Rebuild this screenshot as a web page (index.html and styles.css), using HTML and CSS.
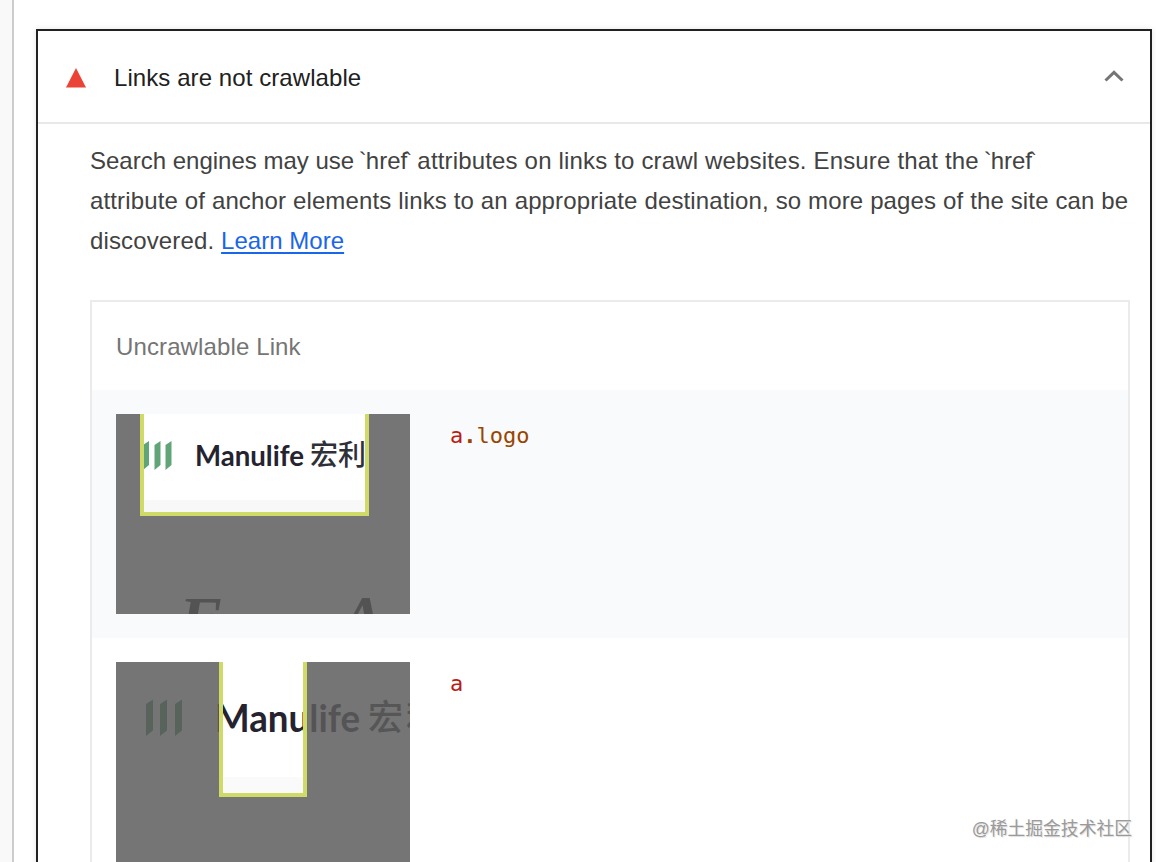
FILE: index.html
```html
<!DOCTYPE html>
<html lang="en">
<head>
<meta charset="utf-8">
<title>Links are not crawlable</title>
<link rel="stylesheet" href="styles.css">
</head>
<body>
<div class="page">
  <aside class="gutter"></aside>
  <main class="audit">
    <header class="audit-header">
      <svg class="fail-icon" width="20" height="20" viewBox="0 0 20 20"><path d="M10 0L20 19.5H0z" fill="#eb4335"/></svg>
      <h1 class="audit-title">Links are not crawlable</h1>
      <svg class="chevron" width="20" height="12" viewBox="0 0 20 12"><path d="M1.500 10.500L10 2.300L18.500 10.500" fill="none" stroke="#757575" stroke-width="3"/></svg>
    </header>
    <section class="audit-body">
      <p class="description"><span class="line">Search engines may use <span class="tick">`</span>href<span class="tick tick-end">`</span> <span class="mid">attributes on links to crawl websites. Ensure that the </span><span class="tick">`</span>href<span class="tick tick-end">`</span></span><span class="line line-wide">attribute of anchor elements links to an appropriate destination, so more pages of the site can be</span><span class="line line-wide">discovered. <a class="link" href="#">Learn More</a></span></p>
      <div class="table">
        <div class="table-head">Uncrawlable Link</div>
        <div class="row row-shaded">
          <svg class="thumb" width="294" height="200" viewBox="0 0 294 200">
            <rect width="294" height="200" fill="#fff"/>
            <rect x="28" y="86" width="221" height="13" fill="#f8f8f8"/>
            <g fill="#5fa578">
              <path d="M27 31l6-4v24l-6 5zM38.500 31l6-4v24l-6 5zM49.500 31l6-4v24l-6 5z"/>
            </g>
            <text class="brand" x="79" y="52" font-size="29" textLength="109" lengthAdjust="spacingAndGlyphs">Manulife</text>
            <text class="brand-cn" x="194" y="51" font-size="28">宏利</text>
            <text class="hero" x="63" y="227" font-size="64">F</text>
            <text class="hero" x="225" y="226" font-size="64">A</text>
            <path class="shade" fill-rule="evenodd" d="M0 0H294V200H0zM24 0V102H253V0z"/>
            <path class="frame" d="M26 0V100H251V0"/>
          </svg>
          <code class="selector"><span class="tag">a</span><span class="dot">.</span>logo</code>
        </div>
        <div class="row">
          <svg class="thumb" width="294" height="200" viewBox="0 0 294 200">
            <rect width="294" height="200" fill="#fff"/>
            <rect x="107" y="115" width="80" height="16" fill="#fafafa"/>
            <g fill="#3f8a55">
              <path d="M30 42l7-4.500v31l-7 5.500zM44 42l7-4.500v31l-7 5.500zM59 42l7-4.500v31l-7 5.500z"/>
            </g>
            <text class="brand" x="99" y="69.500" font-size="38" textLength="145" lengthAdjust="spacingAndGlyphs">Manulife</text>
            <text class="brand-cn" x="252" y="68" font-size="35">宏<tspan dx="3">利</tspan></text>
            <path class="shade" fill-rule="evenodd" d="M0 0H294V200H0zM103 0V135H191V0z"/>
            <path class="frame" d="M105 0V133H189V0"/>
          </svg>
          <code class="selector"><span class="tag">a</span></code>
        </div>
      </div>
    </section>
  </main>
  <div class="watermark">@稀土掘金技术社区</div>
</div>
</body>
</html>
```
FILE: styles.css
```css
* { box-sizing: border-box; }

body {
  margin: 0;
  background: #fff;
  font-family: "Liberation Sans", Arial, sans-serif;
  font-size: 24px;
  color: #424242;
}

.page {
  position: relative;
  display: flex;
  height: 862px;
  overflow: hidden;
}

.gutter {
  flex: 0 0 14px;
  background: #f9f9f9;
  border-right: 2px solid #ccc;
}

.audit {
  flex: 0 0 1116px;
  height: 900px;
  margin: 29px 0 0 22px;
  border: 2px solid #212121;
  box-shadow: 0 0 6px rgba(0, 0, 0, .1);
  background: #fff;
}

.audit-header {
  display: flex;
  align-items: center;
  height: 93px;
  padding: 0 26px 0 28px;
  border-bottom: 2px solid #e8e8e8;
}

.fail-icon { margin-top: 2px; }

.chevron { margin-bottom: 2px; }

.audit-title {
  flex: 1;
  margin: 2px 0 0 28px;
  font-size: 24px;
  font-weight: 400;
  line-height: 40px;
  letter-spacing: .08px;
  color: #212121;
}

.audit-body { padding: 17px 20px 0 52px; }

.description {
  margin: 0;
  line-height: 40px;
}

.line {
  display: block;
  white-space: nowrap;
}

.line-wide { letter-spacing: .14px; }

.mid { letter-spacing: .17px; }

.tick { margin: 0 -1px 0 -2px; }

.tick-end { margin: 0 -1.500px 0 -3px; }

.link {
  color: #1a66e8;
  letter-spacing: .03px;
  text-decoration-thickness: 2px;
  text-underline-offset: 3px;
}

.table {
  height: 700px;
  margin-top: 39px;
  border: 2px solid #ebebeb;
}

.table-head {
  height: 88px;
  padding-left: 24px;
  line-height: 90px;
  letter-spacing: .12px;
  color: #757575;
}

.row {
  display: flex;
  gap: 40px;
  height: 248px;
  padding: 24px;
}

.row-shaded { background: #f8fafb; }

.thumb {
  display: block;
  flex: none;
}

.brand {
  font-family: Lato, sans-serif;
  font-weight: 700;
  fill: #25232f;
}

.brand-cn {
  font-family: "Noto Sans CJK SC", sans-serif;
  font-weight: 500;
  fill: #303038;
}

.hero {
  font-family: "Liberation Serif", serif;
  font-style: italic;
  font-weight: 700;
  fill: #202020;
}

.shade {
  fill: #5d5d5d;
  fill-opacity: .85;
}

.frame {
  fill: none;
  stroke: #d0da67;
  stroke-width: 4;
}

.selector {
  font-family: "DejaVu Sans Mono", monospace;
  font-size: 22px;
  line-height: 44px;
  color: #994500;
}

.tag { color: #b81c14; }

.dot { font-weight: 700; }

.watermark {
  position: absolute;
  right: 24px;
  bottom: 20px;
  font-family: "Liberation Sans", "Noto Sans CJK SC", sans-serif;
  font-size: 17.800px;
  line-height: 26px;
  color: #9a9a9a;
  text-shadow: 1px 1px 1px #ddd;
  white-space: nowrap;
}
```
